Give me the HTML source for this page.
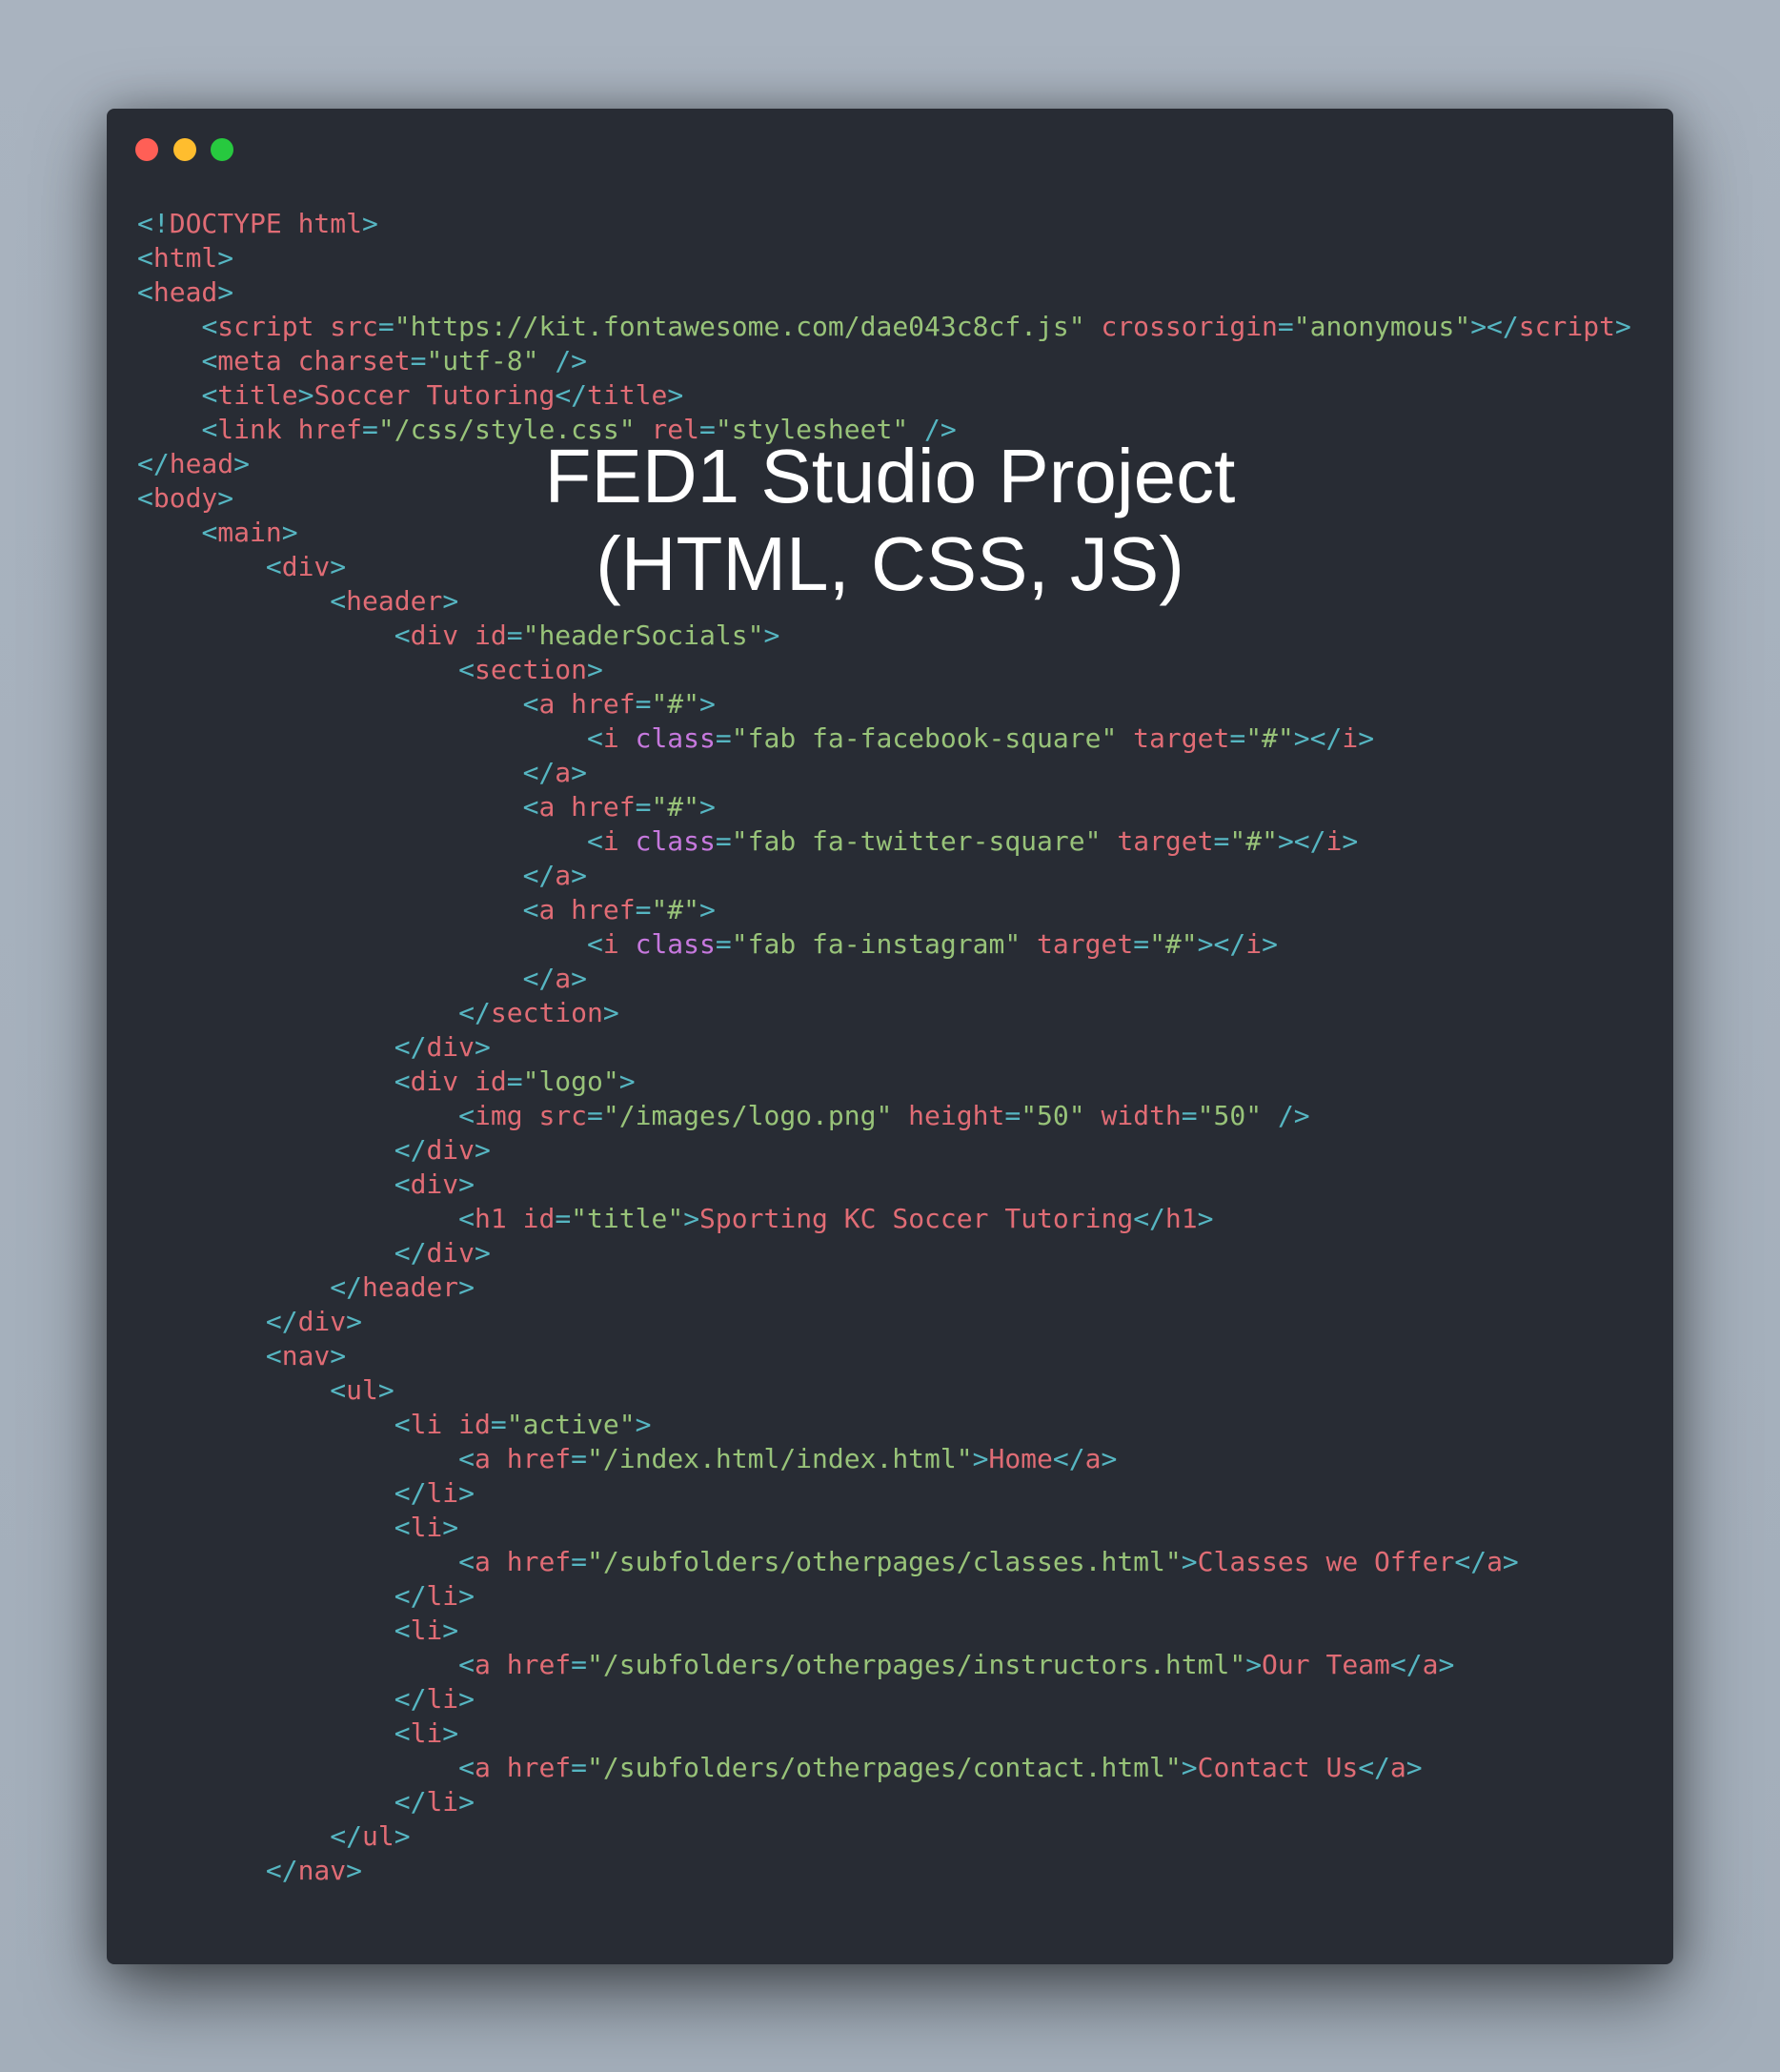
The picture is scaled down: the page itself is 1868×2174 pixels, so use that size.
<!DOCTYPE html>
<html><head><meta charset="utf-8">
<style>
html,body{margin:0;padding:0}
body{width:1868px;height:2174px;background:linear-gradient(180deg,#a9b3bf 0%,#a3aeba 100%);position:relative;overflow:hidden}
.win{position:absolute;left:112px;top:114px;width:1644px;height:1947px;background:#282c34;border-radius:8px;box-shadow:0 30px 80px rgba(0,0,0,0.55),0 0 40px rgba(0,0,0,0.25)}
.dot{position:absolute;top:145px;width:24px;height:24px;border-radius:50%}
pre{position:absolute;left:144px;top:217px;margin:0;font-family:"DejaVu Sans Mono","Liberation Mono",monospace;font-size:28px;line-height:36px;color:#e06c75}
.p{color:#56b6c2}.t{color:#e06c75}.s{color:#98c379}.k{color:#c678dd}
.title{position:absolute;left:0;width:1868px;top:454px;text-align:center;font-family:"Liberation Sans",Arial,sans-serif;font-size:80px;line-height:92px;color:#fff}
</style></head><body>
<div class="win"></div>
<div class="dot" style="left:142px;background:#ff5f56"></div>
<div class="dot" style="left:182px;background:#ffbd2e"></div>
<div class="dot" style="left:221px;background:#27c93f"></div>
<pre><span class="p">&lt;!</span>DOCTYPE html<span class="p">&gt;</span>
<span class="p">&lt;</span>html<span class="p">&gt;</span>
<span class="p">&lt;</span>head<span class="p">&gt;</span>
    <span class="p">&lt;</span>script src<span class="p">=</span><span class="s">"https://kit.fontawesome.com/dae043c8cf.js"</span> crossorigin<span class="p">=</span><span class="s">"anonymous"</span><span class="p">&gt;&lt;/</span>script<span class="p">&gt;</span>
    <span class="p">&lt;</span>meta charset<span class="p">=</span><span class="s">"utf-8"</span> <span class="p">/&gt;</span>
    <span class="p">&lt;</span>title<span class="p">&gt;</span>Soccer Tutoring<span class="p">&lt;/</span>title<span class="p">&gt;</span>
    <span class="p">&lt;</span>link href<span class="p">=</span><span class="s">"/css/style.css"</span> rel<span class="p">=</span><span class="s">"stylesheet"</span> <span class="p">/&gt;</span>
<span class="p">&lt;/</span>head<span class="p">&gt;</span>
<span class="p">&lt;</span>body<span class="p">&gt;</span>
    <span class="p">&lt;</span>main<span class="p">&gt;</span>
        <span class="p">&lt;</span>div<span class="p">&gt;</span>
            <span class="p">&lt;</span>header<span class="p">&gt;</span>
                <span class="p">&lt;</span>div id<span class="p">=</span><span class="s">"headerSocials"</span><span class="p">&gt;</span>
                    <span class="p">&lt;</span>section<span class="p">&gt;</span>
                        <span class="p">&lt;</span>a href<span class="p">=</span><span class="s">"#"</span><span class="p">&gt;</span>
                            <span class="p">&lt;</span>i <span class="k">class</span><span class="p">=</span><span class="s">"fab fa-facebook-square"</span> target<span class="p">=</span><span class="s">"#"</span><span class="p">&gt;&lt;/</span>i<span class="p">&gt;</span>
                        <span class="p">&lt;/</span>a<span class="p">&gt;</span>
                        <span class="p">&lt;</span>a href<span class="p">=</span><span class="s">"#"</span><span class="p">&gt;</span>
                            <span class="p">&lt;</span>i <span class="k">class</span><span class="p">=</span><span class="s">"fab fa-twitter-square"</span> target<span class="p">=</span><span class="s">"#"</span><span class="p">&gt;&lt;/</span>i<span class="p">&gt;</span>
                        <span class="p">&lt;/</span>a<span class="p">&gt;</span>
                        <span class="p">&lt;</span>a href<span class="p">=</span><span class="s">"#"</span><span class="p">&gt;</span>
                            <span class="p">&lt;</span>i <span class="k">class</span><span class="p">=</span><span class="s">"fab fa-instagram"</span> target<span class="p">=</span><span class="s">"#"</span><span class="p">&gt;&lt;/</span>i<span class="p">&gt;</span>
                        <span class="p">&lt;/</span>a<span class="p">&gt;</span>
                    <span class="p">&lt;/</span>section<span class="p">&gt;</span>
                <span class="p">&lt;/</span>div<span class="p">&gt;</span>
                <span class="p">&lt;</span>div id<span class="p">=</span><span class="s">"logo"</span><span class="p">&gt;</span>
                    <span class="p">&lt;</span>img src<span class="p">=</span><span class="s">"/images/logo.png"</span> height<span class="p">=</span><span class="s">"50"</span> width<span class="p">=</span><span class="s">"50"</span> <span class="p">/&gt;</span>
                <span class="p">&lt;/</span>div<span class="p">&gt;</span>
                <span class="p">&lt;</span>div<span class="p">&gt;</span>
                    <span class="p">&lt;</span>h1 id<span class="p">=</span><span class="s">"title"</span><span class="p">&gt;</span>Sporting KC Soccer Tutoring<span class="p">&lt;/</span>h1<span class="p">&gt;</span>
                <span class="p">&lt;/</span>div<span class="p">&gt;</span>
            <span class="p">&lt;/</span>header<span class="p">&gt;</span>
        <span class="p">&lt;/</span>div<span class="p">&gt;</span>
        <span class="p">&lt;</span>nav<span class="p">&gt;</span>
            <span class="p">&lt;</span>ul<span class="p">&gt;</span>
                <span class="p">&lt;</span>li id<span class="p">=</span><span class="s">"active"</span><span class="p">&gt;</span>
                    <span class="p">&lt;</span>a href<span class="p">=</span><span class="s">"/index.html/index.html"</span><span class="p">&gt;</span>Home<span class="p">&lt;/</span>a<span class="p">&gt;</span>
                <span class="p">&lt;/</span>li<span class="p">&gt;</span>
                <span class="p">&lt;</span>li<span class="p">&gt;</span>
                    <span class="p">&lt;</span>a href<span class="p">=</span><span class="s">"/subfolders/otherpages/classes.html"</span><span class="p">&gt;</span>Classes we Offer<span class="p">&lt;/</span>a<span class="p">&gt;</span>
                <span class="p">&lt;/</span>li<span class="p">&gt;</span>
                <span class="p">&lt;</span>li<span class="p">&gt;</span>
                    <span class="p">&lt;</span>a href<span class="p">=</span><span class="s">"/subfolders/otherpages/instructors.html"</span><span class="p">&gt;</span>Our Team<span class="p">&lt;/</span>a<span class="p">&gt;</span>
                <span class="p">&lt;/</span>li<span class="p">&gt;</span>
                <span class="p">&lt;</span>li<span class="p">&gt;</span>
                    <span class="p">&lt;</span>a href<span class="p">=</span><span class="s">"/subfolders/otherpages/contact.html"</span><span class="p">&gt;</span>Contact Us<span class="p">&lt;/</span>a<span class="p">&gt;</span>
                <span class="p">&lt;/</span>li<span class="p">&gt;</span>
            <span class="p">&lt;/</span>ul<span class="p">&gt;</span>
        <span class="p">&lt;/</span>nav<span class="p">&gt;</span></pre>
<div class="title">FED1 Studio Project<br>(HTML, CSS, JS)</div>
</body></html>
